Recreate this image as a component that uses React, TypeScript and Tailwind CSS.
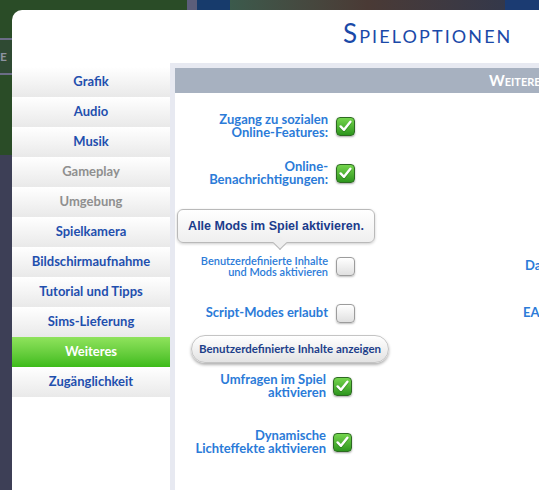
import React from 'react';

const lato = { fontFamily: 'Lato, "Open Sans", sans-serif' };

const Box = ({ on }: { on: boolean }) =>
  on ? (
    <div className="w-[19px] h-[19px] shrink-0 rounded-[4px] border border-[#2d6a22] bg-linear-to-b from-[#74d54d] to-[#2c961d] flex items-center justify-center shadow-[0_1px_2px_rgba(0,0,0,0.35)]">
      <svg width="13" height="12" viewBox="0 0 13 12">
        <path d="M1.6 6.4 L5 9.8 L11.4 1.8" stroke="#1e5a15" strokeWidth="3" fill="none" strokeLinecap="round" strokeLinejoin="round" opacity="0.35" transform="translate(0 0.8)" />
        <path d="M1.6 6.4 L5 9.8 L11.4 1.8" stroke="white" strokeWidth="2.4" fill="none" strokeLinecap="round" strokeLinejoin="round" />
      </svg>
    </div>
  ) : (
    <div className="w-[19px] h-[19px] shrink-0 rounded-[4px] border border-[#9c9c9c] bg-linear-to-b from-white to-[#e0e0e0] shadow-[0_1px_2px_rgba(0,0,0,0.25)]" />
  );

const navItems = [
  { t: 'Grafik' },
  { t: 'Audio' },
  { t: 'Musik' },
  { t: 'Gameplay', off: true },
  { t: 'Umgebung', off: true },
  { t: 'Spielkamera' },
  { t: 'Bildschirmaufnahme' },
  { t: 'Tutorial und Tipps' },
  { t: 'Sims-Lieferung' },
  { t: 'Weiteres', active: true },
  { t: 'Zugänglichkeit' },
];

export default function App() {
  return (
    <div className="w-[539px] h-[490px] overflow-hidden flex flex-col bg-[#2a4c27]" style={lato}>
      {/* backdrop behind the dialog */}
      <div className="h-[10px] flex shrink-0">
        <div className="w-[187px] bg-[#2a4c27]" />
        <div className="w-[10px] bg-[#5c5e7a]" />
        <div className="w-[33px] bg-[#173b6c]" />
        <div className="w-[275px] bg-linear-to-r from-[#3b5a4c] via-[#4a3a35] to-[#34384a]" />
        <div className="flex-1 bg-[#1b3b72]" />
      </div>
      <div className="flex flex-1 min-h-0">
        <div className="w-[12px] shrink-0 flex flex-col">
          <div className="h-[28px] bg-[#2a4c27]" />
          <div className="h-[37px] border-y-2 border-[#6b6d86] bg-[#2f4a33] text-[#8e93a0] text-[12px] font-bold flex items-center leading-none overflow-hidden">E</div>
          <div className="h-[80px] bg-[#2a4c27]" />
          <div className="flex-1 bg-[#3d3f56]" />
        </div>
        <div className="w-[527px] bg-white rounded-tl-[10px] overflow-hidden flex flex-col">
          <div className="h-[53px] shrink-0 flex items-center pl-[331px]">
            <span className="mb-[8px] text-[26px] text-[#1a49a8] leading-none tracking-[2.1px] whitespace-nowrap" style={{ fontVariant: 'small-caps' }}>
              Spieloptionen
            </span>
          </div>
          <div className="flex flex-1 min-h-0">
            <div className="w-[158px] shrink-0 pt-[4px] flex flex-col">
              {navItems.map((n) => (
                <div
                  key={n.t}
                  className={
                    n.active
                      ? 'h-[30px] flex items-center justify-center bg-linear-to-b from-[#8fe35c] to-[#3cbb18] text-white text-[13px] font-bold'
                      : n.off
                      ? 'h-[30px] flex items-center justify-center bg-linear-to-b from-white to-[#e9e9e9] text-[#8f8f8f] text-[13px] font-bold'
                      : 'h-[30px] flex items-center justify-center bg-linear-to-b from-white to-[#e9e9e9] text-[#1f4fae] text-[13px] font-bold'
                  }
                >
                  {n.t}
                </div>
              ))}
            </div>
            <div className="w-[5px] shrink-0 bg-[#e7e9f1]" />
            <div className="flex-1 flex flex-col min-w-0">
              <div className="h-[5px] shrink-0 bg-[#e7e9f1]" />
              <div className="h-[25px] shrink-0 bg-[#a7b1c0] flex items-center pl-[314px]">
                <span className="text-white text-[15px] font-bold whitespace-nowrap" style={{ fontVariant: 'small-caps' }}>
                  Weiteres
                </span>
              </div>
              <div className="flex flex-col text-[#2b7bd8] font-bold">
                <div className="mt-[17px] h-[32px] flex items-center">
                  <div className="w-[153px] shrink-0 text-right text-[13px] leading-[13px] whitespace-nowrap">
                    Zugang zu sozialen<br />Online-Features:
                  </div>
                  <div className="ml-[8px]"><Box on /></div>
                </div>
                <div className="mt-[15px] h-[32px] flex items-center">
                  <div className="w-[153px] shrink-0 text-right text-[13px] leading-[13px] whitespace-nowrap">
                    Online-<br />Benachrichtigungen:
                  </div>
                  <div className="ml-[8px]"><Box on /></div>
                </div>
                <div className="mt-[61px] h-[32px] flex items-center relative">
                  <div className="absolute left-[2px] bottom-[39px] w-[198px] h-[34px] rounded-[6px] border border-[#b9b9b9] bg-linear-to-b from-white to-[#efefef] shadow-[0_1px_3px_rgba(0,0,0,0.2)] flex items-center justify-center">
                    <span className="text-[#1b3c8c] text-[12.5px] font-bold whitespace-nowrap" style={{ fontFamily: '"Liberation Sans", Arial, sans-serif' }}>
                      Alle Mods im Spiel aktivieren.
                    </span>
                    <div className="absolute left-[97px] -bottom-[6px] w-[10px] h-[10px] rotate-45 bg-[#efefef] border-r border-b border-[#b9b9b9]" />
                  </div>
                  <div className="w-[153px] shrink-0 text-right text-[11px] leading-[11px] font-semibold whitespace-nowrap">
                    Benutzerdefinierte Inhalte<br />und Mods aktivieren
                  </div>
                  <div className="ml-[8px]"><Box on={false} /></div>
                  <span className="ml-[170px] text-[13px] whitespace-nowrap">Datenerfassung</span>
                </div>
                <div className="mt-[15px] h-[32px] flex items-center">
                  <div className="w-[153px] shrink-0 text-right text-[13px] whitespace-nowrap">Script-Modes erlaubt</div>
                  <div className="ml-[8px]"><Box on={false} /></div>
                  <span className="ml-[168px] text-[13px] whitespace-nowrap">EA-Konto</span>
                </div>
                <div className="mt-[6px] ml-[16px] w-[198px] h-[28px] rounded-full border border-[#c4c4c4] bg-linear-to-b from-white to-[#e3e3e3] shadow-[0_2px_3px_rgba(0,0,0,0.3)] flex items-center justify-center">
                  <span className="text-[#1d3f8a] text-[11.5px] font-bold whitespace-nowrap">
                    Benutzerdefinierte Inhalte anzeigen
                  </span>
                </div>
                <div className="mt-[7px] h-[32px] flex items-center">
                  <div className="w-[151px] shrink-0 text-right text-[13px] leading-[13px] whitespace-nowrap">
                    Umfragen im Spiel<br />aktivieren
                  </div>
                  <div className="ml-[7px]"><Box on /></div>
                </div>
                <div className="mt-[24px] h-[32px] flex items-center">
                  <div className="w-[151px] shrink-0 text-right text-[13px] leading-[13px] whitespace-nowrap">
                    Dynamische<br />Lichteffekte aktivieren
                  </div>
                  <div className="ml-[7px]"><Box on /></div>
                </div>
              </div>
            </div>
          </div>
        </div>
      </div>
    </div>
  );
}
